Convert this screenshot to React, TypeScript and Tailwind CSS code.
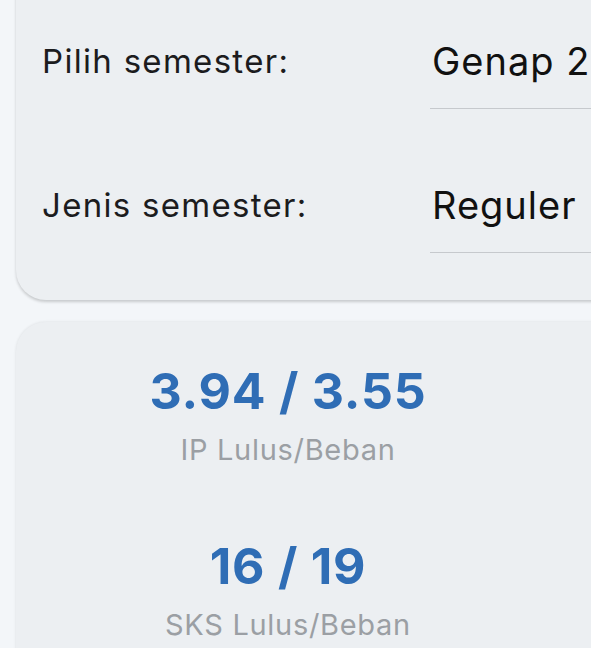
export default function App() {
  return (
    <div
      className="h-[648px] w-[591px] overflow-hidden bg-[#f3f6f9] pl-[16px]"
      style={{ fontFamily: "Inter, 'Noto Sans', sans-serif" }}
    >
      <div className="-mt-[40px] w-[900px] rounded-[30px] bg-[#eceff2] pt-[55px] pb-[47px] pl-[26px] shadow-[0_2px_3px_rgba(0,0,0,0.18)]">
        <div className="flex flex-col gap-[50px]">
          <div className="flex h-[94px] items-center">
            <span className="w-[388px] text-[33px] tracking-[1.3px] text-[#1c1c1e]">Pilih semester:</span>
            <div className="flex h-full flex-1 items-center border-b border-[#c6c9cd] pl-[2px] text-[38px] tracking-[1px] text-[#111]">
              Genap 2023/2024
            </div>
          </div>
          <div className="flex h-[94px] items-center">
            <span className="w-[388px] text-[33px] tracking-[1.3px] text-[#1c1c1e]">Jenis semester:</span>
            <div className="flex h-full flex-1 items-center border-b border-[#c6c9cd] pl-[2px] text-[38px] tracking-[1px] text-[#111]">
              Reguler
            </div>
          </div>
        </div>
      </div>

      <div className="mt-[22px] w-[1120px] rounded-[30px] bg-[#eceff2] pt-[38px] pb-[40px] shadow-[0_0_3px_rgba(0,0,0,0.1)]">
        <div className="grid w-[544px] grid-cols-1 gap-[64px]">
          <div className="flex flex-col items-center">
            <span className="text-[50px] font-bold leading-tight tracking-[0.8px] text-[#2f6db5]">3.94 / 3.55</span>
            <span className="mt-[5px] text-[29px] tracking-[0.7px] text-[#9b9fa4]">IP Lulus/Beban</span>
          </div>
          <div className="flex flex-col items-center">
            <span className="text-[50px] font-bold leading-tight tracking-[0.8px] text-[#2f6db5]">16 / 19</span>
            <span className="mt-[5px] text-[29px] tracking-[0.7px] text-[#9b9fa4]">SKS Lulus/Beban</span>
          </div>
        </div>
      </div>
    </div>
  );
}
